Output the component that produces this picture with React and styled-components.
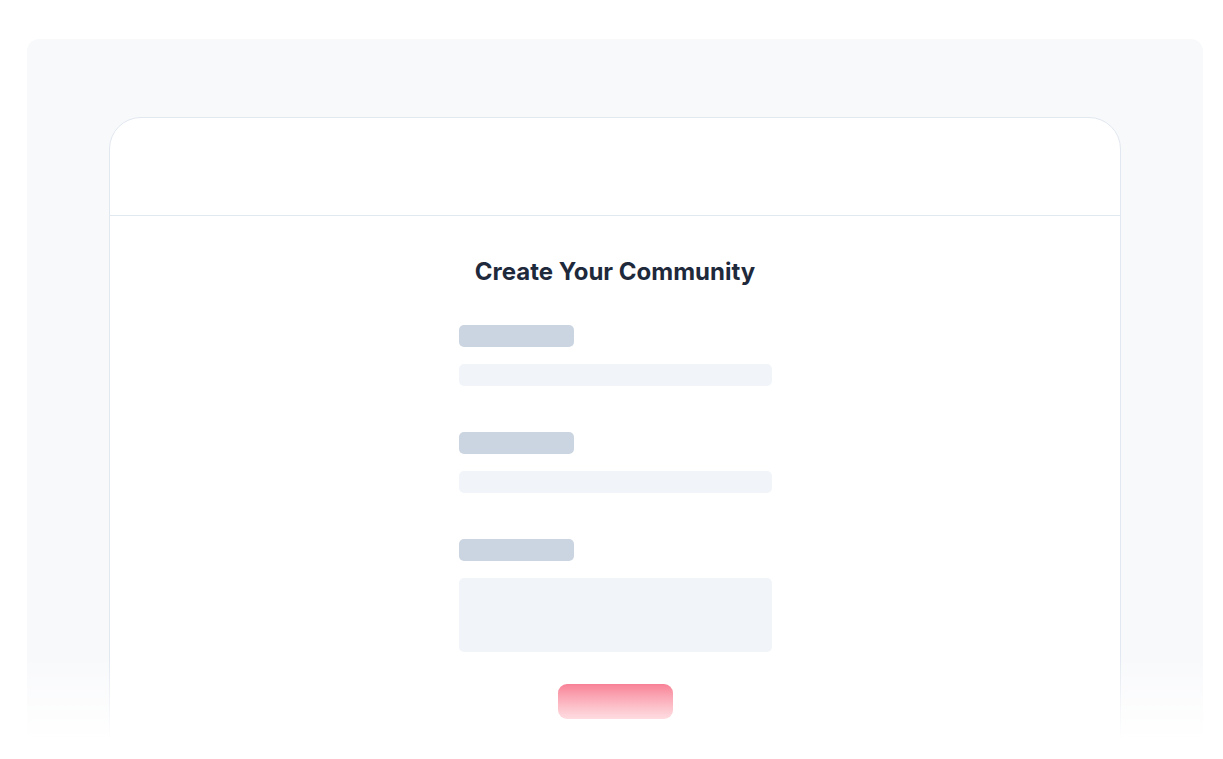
import styled, { createGlobalStyle } from "styled-components";

const GlobalStyle = createGlobalStyle`
  html, body {
    margin: 0;
    padding: 0;
    background: #ffffff;
    font-family: Inter, "Noto Sans", sans-serif;
  }
`;

const Viewport = styled.div`
  position: relative;
  height: 759px;
  overflow: hidden;
  padding: 39px 20px 0 27px;
  box-sizing: border-box;
`;

const Panel = styled.div`
  background: #f8f9fb;
  border-radius: 12px;
  padding: 78px 82px 0 82px;
  height: 800px;
  box-sizing: border-box;
`;

const Card = styled.div`
  background: #ffffff;
  border: 1px solid #e2e8f0;
  border-radius: 32px 32px 0 0;
  height: 100%;
`;

const CardHeader = styled.div`
  height: 97px;
  border-bottom: 1px solid #e2e8f0;
`;

const CardBody = styled.div`
  display: flex;
  flex-direction: column;
  align-items: center;
  padding-top: 41px;
`;

const Title = styled.h1`
  margin: 0;
  font-size: 24px;
  line-height: 30px;
  font-weight: 700;
  color: #1e293b;
`;

const Form = styled.div`
  width: 313px;
  margin-top: 38px;
  display: flex;
  flex-direction: column;
  gap: 46px;
`;

const Field = styled.div`
  display: flex;
  flex-direction: column;
  gap: 17px;
`;

const LabelBar = styled.div`
  width: 115px;
  height: 22px;
  border-radius: 5px;
  background: #cbd5e1;
`;

const InputBar = styled.div`
  height: ${(p) => p.$height}px;
  border-radius: 5px;
  background: #f1f5f9;
`;

const SubmitBar = styled.div`
  width: 115px;
  height: 35px;
  margin-top: 32px;
  border-radius: 9px;
  background: linear-gradient(180deg, #f43f5e 0%, #fb7185 100%);
`;

const Fade = styled.div`
  position: absolute;
  left: 0;
  right: 0;
  top: 655px;
  height: 85px;
  background: linear-gradient(180deg, rgba(255, 255, 255, 0) 0%, #ffffff 100%);
  &::after {
    content: "";
    position: absolute;
    left: 0;
    right: 0;
    top: 100%;
    height: 40px;
    background: #ffffff;
  }
`;

const fields = [22, 22, 74];

export default function App() {
  return (
    <>
      <GlobalStyle />
      <Viewport>
        <Panel>
          <Card>
            <CardHeader />
            <CardBody>
              <Title>Create Your Community</Title>
              <Form>
                {fields.map((h, i) => (
                  <Field key={i}>
                    <LabelBar />
                    <InputBar $height={h} />
                  </Field>
                ))}
              </Form>
              <SubmitBar />
            </CardBody>
          </Card>
        </Panel>
        <Fade />
      </Viewport>
    </>
  );
}
